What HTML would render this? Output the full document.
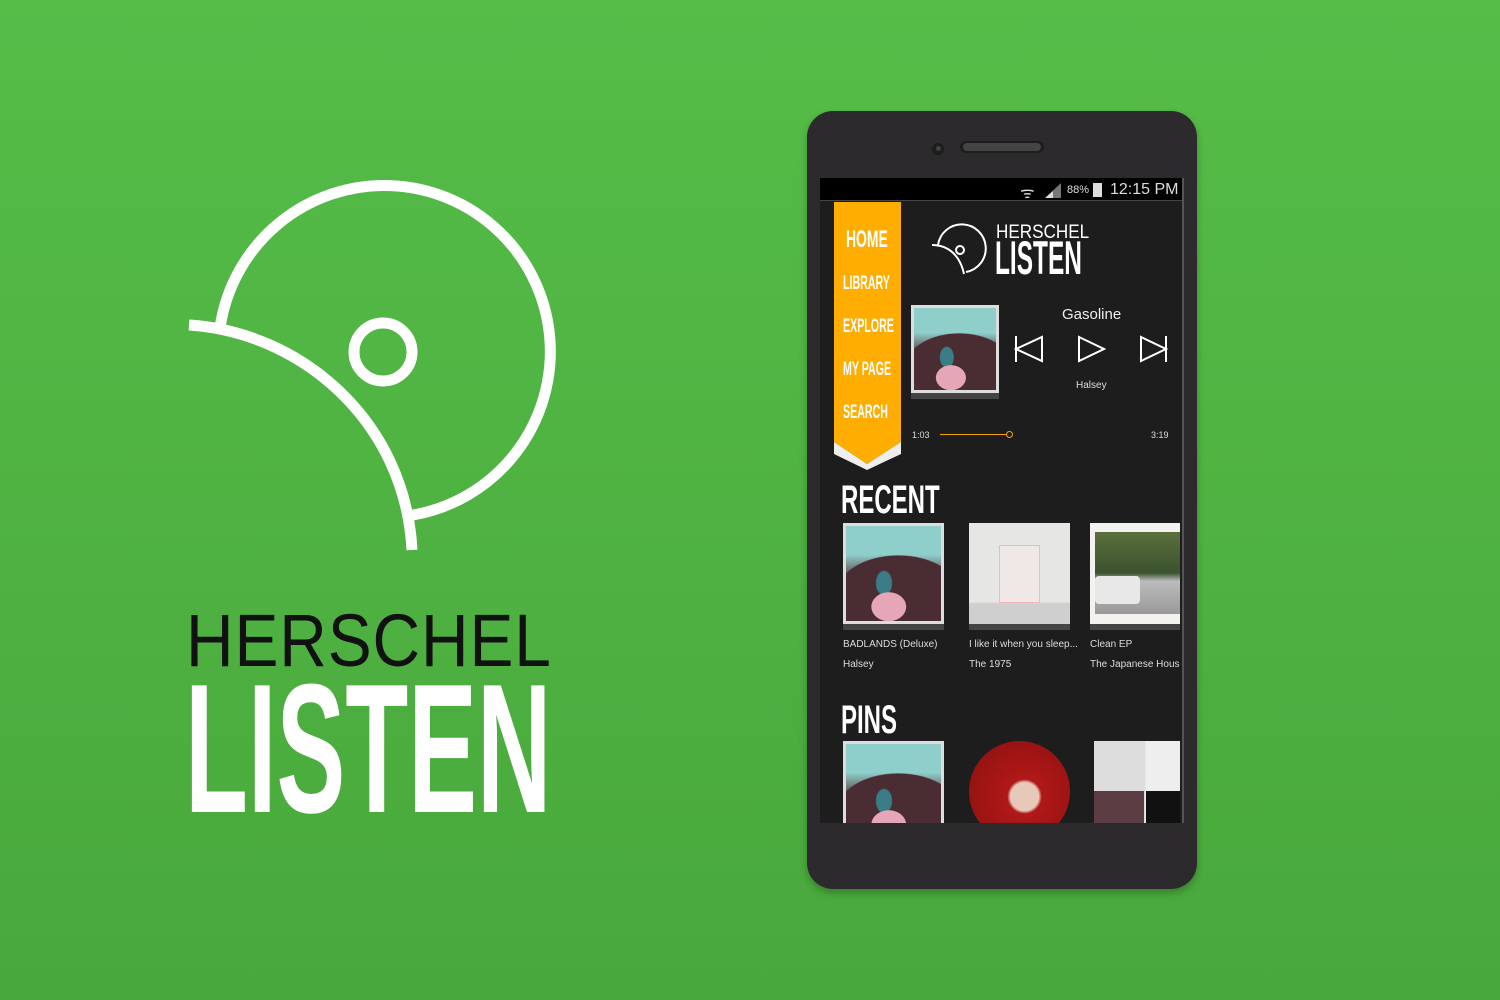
<!DOCTYPE html>
<html><head><meta charset="utf-8"><style>
*{margin:0;padding:0;box-sizing:border-box}
body{width:1500px;height:1000px;overflow:hidden;background:linear-gradient(#55bd48,#49a83c);font-family:"Liberation Sans",sans-serif;position:relative}
.abs{position:absolute}
.cond{font-family:"Liberation Sans",sans-serif;font-weight:bold;transform-origin:0 0;white-space:nowrap;color:#fff}
.bad{background:
 radial-gradient(ellipse 30% 25% at 45% 85%,#e5a7b8 60%,transparent 62%),
 radial-gradient(ellipse 20% 30% at 40% 60%,#3a7d86 40%,transparent 45%),
 radial-gradient(ellipse 90% 55% at 55% 70%,#4a2c33 70%,transparent 72%),
 linear-gradient(#8fcfcb 0,#8fcfcb 30%,#5b3d43 55%,#4a2c33);border:3px solid #ddd;border-bottom-width:3px}
.t{position:absolute;color:#ddd;font-size:10px}
</style></head><body>

<svg class="abs" style="left:0;top:0" width="700" height="1000">
 <g fill="none" stroke="#fff" stroke-width="11">
  <path d="M220,328 A166 166 0 1 1 413,515"/>
  <path d="M189,325 C300,332 405,420 412,550"/>
  <circle cx="383" cy="352" r="29"/>
 </g>
</svg>
<div class="abs" style="left:186px;top:604px;font-size:74px;color:#111;transform:scaleX(0.89);transform-origin:0 0;letter-spacing:1px;line-height:1">HERSCHEL</div>
<div class="abs cond" style="left:185px;top:656px;font-size:184px;line-height:1;transform:scaleX(0.56)">LISTEN</div>

<div class="abs" style="left:807px;top:111px;width:390px;height:778px;background:#2c2a2c;border-radius:26px;box-shadow:0 4px 8px rgba(0,0,0,.25)"></div>
<div class="abs" style="left:932px;top:143px;width:12px;height:12px;border-radius:50%;background:#1e1d1e"></div>
<div class="abs" style="left:936px;top:146px;width:5px;height:5px;border-radius:50%;background:#444"></div>
<div class="abs" style="left:960px;top:141px;width:84px;height:12px;border-radius:6px;background:#1e1d1e"></div>
<div class="abs" style="left:963px;top:143px;width:78px;height:8px;border-radius:4px;background:#444"></div>

<div class="abs" style="left:820px;top:178px;width:364px;height:645px;background:#1e1d1e;overflow:hidden;border-right:2px solid #555">
 <div class="abs" style="left:0;top:0;width:364px;height:23px;background:#000;border-bottom:1px solid #444"></div>
 <div class="abs" style="left:200px;top:3px;color:#ddd;font-size:16px">ᯤ</div>
 <svg class="abs" style="left:225px;top:5px" width="16" height="15"><path d="M0,15 L16,15 L16,0Z" fill="#777"/><path d="M0,15 L8,15 L8,8Z" fill="#ddd"/></svg>
 <div class="abs" style="left:247px;top:6px;color:#ddd;font-size:11px">88%</div>
 <div class="abs" style="left:273px;top:5px;width:9px;height:14px;background:#ddd"></div>
 <div class="abs" style="left:290px;top:3px;color:#ddd;font-size:16px">12:15 PM</div>

 <svg class="abs" style="left:14px;top:24px" width="67" height="268"><path d="M0,0H67V240L33,262L0,240Z" fill="#ffad00"/><path d="M0,240L33,262L67,240V252L33,268L0,252Z" fill="#eee"/></svg>
 <div class="abs cond" style="left:26px;top:48px;font-size:24px;transform:scaleX(.58)">HOME</div>
 <div class="abs cond" style="left:23px;top:95px;font-size:19px;transform:scaleX(.56)">LIBRARY</div>
 <div class="abs cond" style="left:23px;top:138px;font-size:19px;transform:scaleX(.56)">EXPLORE</div>
 <div class="abs cond" style="left:23px;top:181px;font-size:19px;transform:scaleX(.56)">MY PAGE</div>
 <div class="abs cond" style="left:23px;top:224px;font-size:19px;transform:scaleX(.56)">SEARCH</div>

 <svg class="abs" style="left:110px;top:45px" width="60" height="55"><g fill="none" stroke="#fff" stroke-width="2"><path d="M8,22 A24 24 0 1 1 36,49"/><path d="M2,22 C18,22 30,32 34,51"/><circle cx="30" cy="27" r="4"/></g></svg>
 <div class="abs" style="left:176px;top:45px;color:#fff;font-size:19px;line-height:1;transform:scaleX(.9);transform-origin:0 0">HERSCHEL</div>
 <div class="abs cond" style="left:175px;top:56px;font-size:47px;line-height:1;transform:scaleX(.52)">LISTEN</div>

 <div class="abs bad" style="left:91px;top:127px;width:88px;height:88px"></div>
 <div class="abs" style="left:91px;top:215px;width:88px;height:6px;background:#444"></div>
 <div class="abs" style="left:242px;top:128px;color:#eee;font-size:15px">Gasoline</div>
 <svg class="abs" style="left:190px;top:155px" width="170" height="32"><g fill="none" stroke="#fff" stroke-width="2"><path d="M6,3V29M6,16L32,4V28Z"/><path d="M69,4L94,16L69,28Z"/><path d="M131,4L156,16L131,28ZM156,3V29"/></g></svg>
 <div class="abs" style="left:256px;top:202px;color:#ddd;font-size:10px">Halsey</div>
 <div class="abs" style="left:92px;top:252px;color:#ddd;font-size:9px">1:03</div>
 <div class="abs" style="left:120px;top:256px;width:66px;height:1px;background:#f5a300"></div>
 <div class="abs" style="left:186px;top:253px;width:7px;height:7px;border:1.5px solid #f5a300;border-radius:50%"></div>
 <div class="abs" style="left:331px;top:252px;color:#ddd;font-size:9px">3:19</div>

 <div class="abs cond" style="left:21px;top:302px;font-size:40px;line-height:1;transform:scaleX(.6)">RECENT</div>
 <div class="abs bad" style="left:23px;top:345px;width:101px;height:101px"></div>
 <div class="abs" style="left:23px;top:446px;width:101px;height:6px;background:#444"></div>
 <div class="abs" style="left:149px;top:345px;width:101px;height:101px;background:linear-gradient(#e6e6e4 0,#e6e6e4 78%,#cfcfcf 80%)"><div class="abs" style="left:30px;top:22px;width:41px;height:58px;border:1.5px solid #f5b8b8;background:#efe8e6"></div></div>
 <div class="abs" style="left:149px;top:446px;width:101px;height:6px;background:#444"></div>
 <div class="abs" style="left:270px;top:345px;width:90px;height:101px;background:#f3f2ef"><div class="abs" style="left:5px;top:9px;width:85px;height:82px;background:linear-gradient(#5a6e3a,#3c5330 50%,#bbb 60%,#9a9a9a)"><div class="abs" style="left:0;top:44px;width:45px;height:28px;background:#e8e8e8;border-radius:4px"></div></div></div>
 <div class="abs" style="left:270px;top:446px;width:90px;height:6px;background:#444"></div>
 <div class="t" style="left:23px;top:461px">BADLANDS (Deluxe)</div>
 <div class="t" style="left:149px;top:461px">I like it when you sleep...</div>
 <div class="t" style="left:270px;top:461px;white-space:nowrap">Clean EP</div>
 <div class="t" style="left:23px;top:481px">Halsey</div>
 <div class="t" style="left:149px;top:481px">The 1975</div>
 <div class="t" style="left:270px;top:481px;white-space:nowrap">The Japanese Hous</div>

 <div class="abs cond" style="left:21px;top:522px;font-size:40px;line-height:1;transform:scaleX(.6)">PINS</div>
 <div class="abs bad" style="left:23px;top:563px;width:101px;height:101px"></div>
 <div class="abs" style="left:149px;top:563px;width:101px;height:101px;border-radius:50%;background:radial-gradient(circle at 55% 55%,#e8c8b8 18%,#b01818 22%,#8a1010)"></div>
 <div class="abs" style="left:274px;top:563px;width:86px;height:90px;background:linear-gradient(90deg,#ddd 0,#ddd 60%,#eee 60%)"><div class="abs" style="left:0;top:50px;width:50px;height:40px;background:#5b3d43"></div><div class="abs" style="left:52px;top:50px;width:34px;height:40px;background:#111"></div></div>
</div>
</body></html>
